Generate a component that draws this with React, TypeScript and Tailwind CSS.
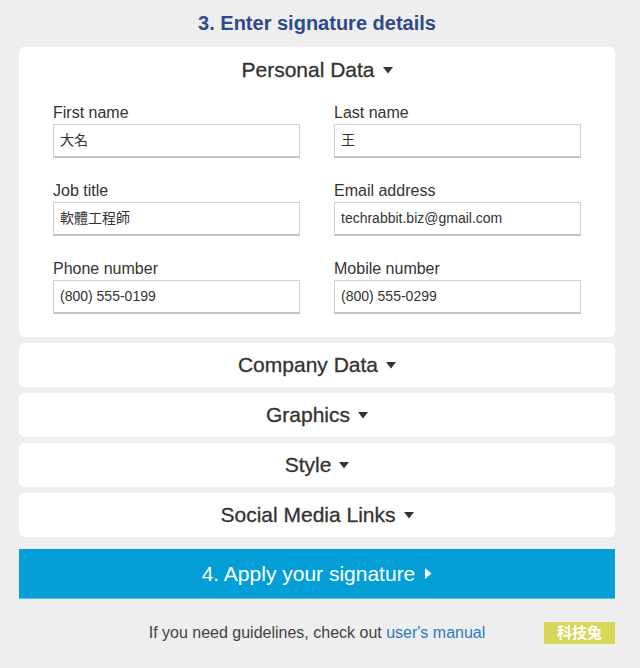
import React from "react";

const FONT = { fontFamily: '"Liberation Sans", Arial, "Noto Sans CJK TC", sans-serif' };

const Caret = () => (
  <svg width="10" height="7" viewBox="0 0 10 7" className="ml-[8px] inline-block">
    <path d="M0 0 L10 0 L5 6.5 Z" fill="#333" />
  </svg>
);

const Field = ({ label, value }: { label: string; value: string }) => (
  <div>
    <div className="text-[16px] leading-[18px] text-[#333]">{label}</div>
    <div className="mt-[2px] h-[34px] border border-[#cfcfcf] border-b-2 border-b-[#c4c4c4] bg-white px-[6px] flex items-center text-[14px] text-[#333]">
      {value}
    </div>
  </div>
);

const Section = ({ title }: { title: string }) => (
  <div className="h-[44px] bg-white rounded-[5px] flex items-center justify-center text-[21px] text-[#333] [-webkit-text-stroke:0.3px_#333]">
    {title}
    <Caret />
  </div>
);

export default function App() {
  return (
    <div className="min-h-[668px] bg-[#eeeeee] pl-[19px] pr-[25px]" style={FONT}>
      <div className="h-[47px] flex items-center justify-center pb-[1px] text-[20px] font-bold text-[#2f4a88]">
        3. Enter signature details
      </div>

      <div className="bg-white rounded-[5px] px-[34px] pb-[23px]">
        <div className="h-[46px] flex items-center justify-center text-[21px] text-[#333] [-webkit-text-stroke:0.3px_#333]">
          Personal Data
          <Caret />
        </div>
        <div className="grid grid-cols-2 gap-x-[34px] gap-y-[24px] pt-[11px]">
          <Field label="First name" value="大名" />
          <Field label="Last name" value="王" />
          <Field label="Job title" value="軟體工程師" />
          <Field label="Email address" value="techrabbit.biz@gmail.com" />
          <Field label="Phone number" value="(800) 555-0199" />
          <Field label="Mobile number" value="(800) 555-0299" />
        </div>
      </div>

      <div className="flex flex-col gap-[6px] mt-[6px]">
        <Section title="Company Data" />
        <Section title="Graphics" />
        <Section title="Style" />
        <Section title="Social Media Links" />
      </div>

      <div className="mt-[12px] h-[50px] bg-[#049fd6] flex items-center justify-center text-[21px] text-white border-b border-b-[#5cc3e8]">
        4. Apply your signature
        <svg width="7" height="11" viewBox="0 0 7 11" className="ml-[10px]">
          <path d="M0 0 L6.5 5.5 L0 11 Z" fill="#fff" />
        </svg>
      </div>

      <div className="relative h-[68px] flex items-center justify-center text-[16px] text-[#444]">
        <span>
          If you need guidelines, check out <span className="text-[#2b7bbf]">user's manual</span>
        </span>
        <div className="absolute right-0 top-[23px] w-[71px] h-[22px] bg-[#d8d656] text-white font-bold text-[15px] flex items-center justify-center">
          科技兔
        </div>
      </div>
    </div>
  );
}
